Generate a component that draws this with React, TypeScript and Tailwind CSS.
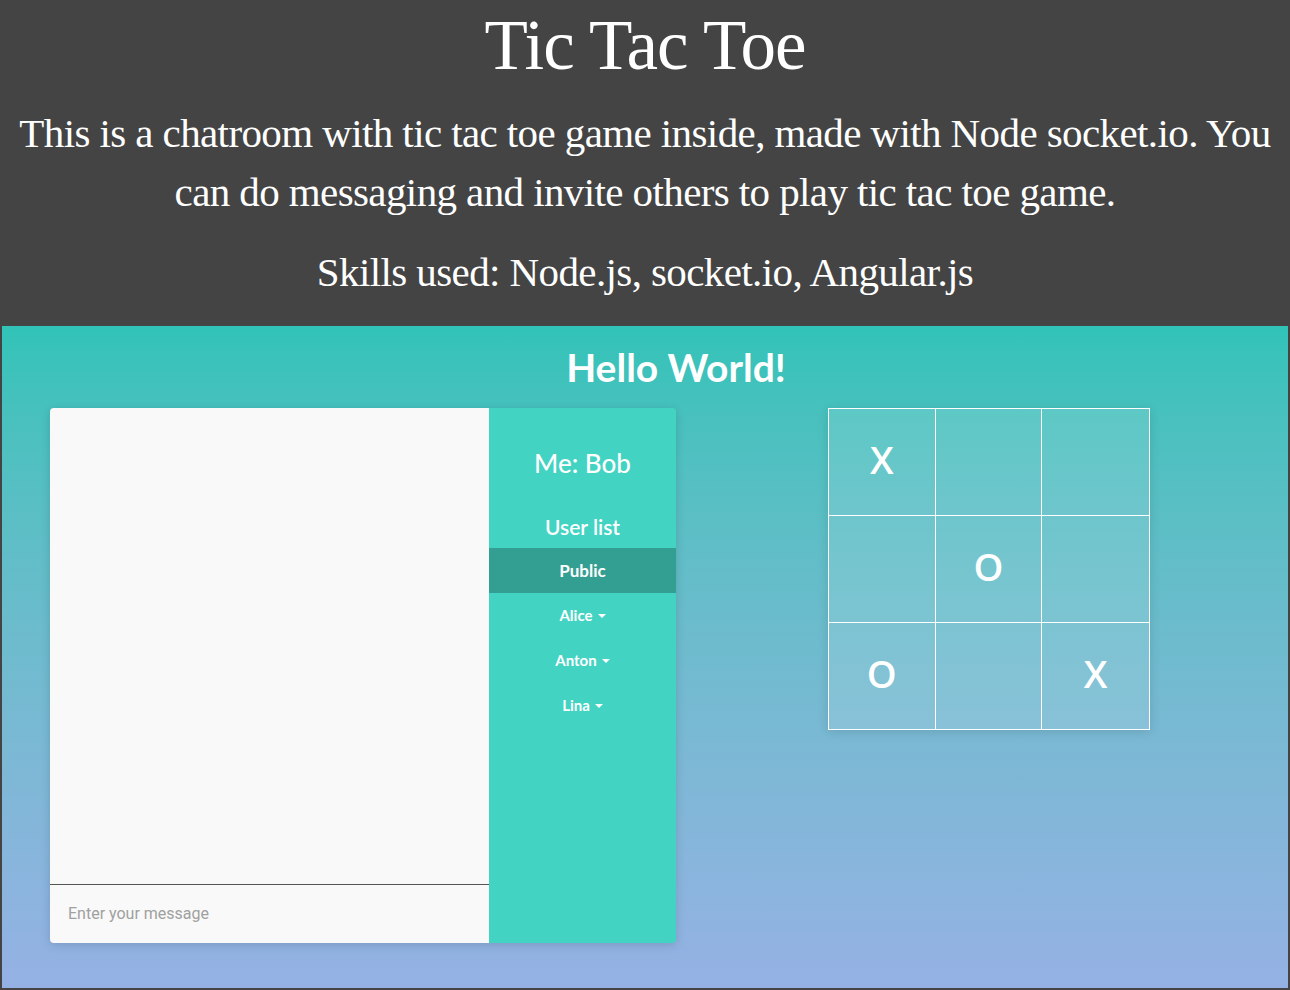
import React from 'react'

const cells = ['X', '', '', '', 'O', '', 'O', '', 'X']
const users = ['Alice', 'Anton', 'Lina']

function Caret() {
    return <span className="ml-[5px] inline-block h-0 w-0 border-x-[4px] border-t-[4px] border-x-transparent border-t-white align-middle" />
}

export default function App() {
    return (
        <div className="min-h-[990px] w-[1290px] bg-[#444444] px-[2px] pb-[2px]">
            {/* Intro */}
            <header className="flex flex-col items-center pb-[24px] text-center text-white" style={{ fontFamily: '"Liberation Serif", "DejaVu Serif", serif' }}>
                <h1 className="text-[71px] leading-[90px] tracking-[-1px]">Tic Tac Toe</h1>
                <p className="mt-[14px] w-[1270px] text-[41px] leading-[59px] tracking-[-0.6px]">
                    This is a chatroom with tic tac toe game inside, made with Node socket.io. You can do messaging and invite others to play tic tac toe game.
                </p>
                <p className="mt-[21px] text-[41px] leading-[59px] tracking-[-0.6px]">Skills used: Node.js, socket.io, Angular.js</p>
            </header>

            {/* Demo */}
            <section className="h-[662px] bg-gradient-to-b from-[#31c3b8] to-[#95b1e4]" style={{ fontFamily: 'Lato, "Open Sans", sans-serif' }}>
                <h2 className="pl-[62px] pt-[21px] text-center text-[39px] font-bold leading-[40px] text-white">Hello World!</h2>

                <div className="mt-[21px] flex items-start gap-[152px] pl-[48px]">
                    {/* Chat */}
                    <div className="flex h-[535px] w-[626px] overflow-hidden rounded-[4px] shadow-[0_2px_10px_rgba(0,0,0,0.15)]">
                        <div className="flex w-[439px] flex-col bg-[#f9f9f9]">
                            <div className="flex-1 border-b border-[#555555]" />
                            <div className="flex h-[58px] items-center px-[18px] text-[16px] text-[#a0a0a0]" style={{ fontFamily: 'Roboto, "Liberation Sans", sans-serif' }}>
                                Enter your message
                            </div>
                        </div>
                        <div className="flex flex-1 flex-col items-stretch bg-[#43d3c3] text-center text-white">
                            <div className="pt-[40px] text-[26px] font-medium leading-[30px]">Me: Bob</div>
                            <div className="mt-[37px] text-[21px] font-semibold leading-[24px]">User list</div>
                            <div className="mt-[9px] flex h-[45px] items-center justify-center bg-[#329f92] text-[17px] font-bold">Public</div>
                            {users.map((u) => (
                                <div key={u} className="flex h-[45px] items-center justify-center text-[15px] font-bold">
                                    {u}
                                    <Caret />
                                </div>
                            ))}
                        </div>
                    </div>

                    {/* Board */}
                    <div className="grid h-[322px] w-[322px] grid-cols-3 border border-white shadow-[0_2px_10px_rgba(0,0,0,0.12)]">
                        {cells.map((c, i) => (
                            <div
                                key={i}
                                className={`flex items-center justify-center bg-white/[0.12] pb-[5px] text-[38px] font-semibold text-white ${i % 3 !== 2 ? 'border-r' : ''} ${i < 6 ? 'border-b' : ''} border-white`}
                                style={{ fontFamily: '"Open Sans", sans-serif' }}
                            >
                                {c}
                            </div>
                        ))}
                    </div>
                </div>
            </section>
        </div>
    )
}
